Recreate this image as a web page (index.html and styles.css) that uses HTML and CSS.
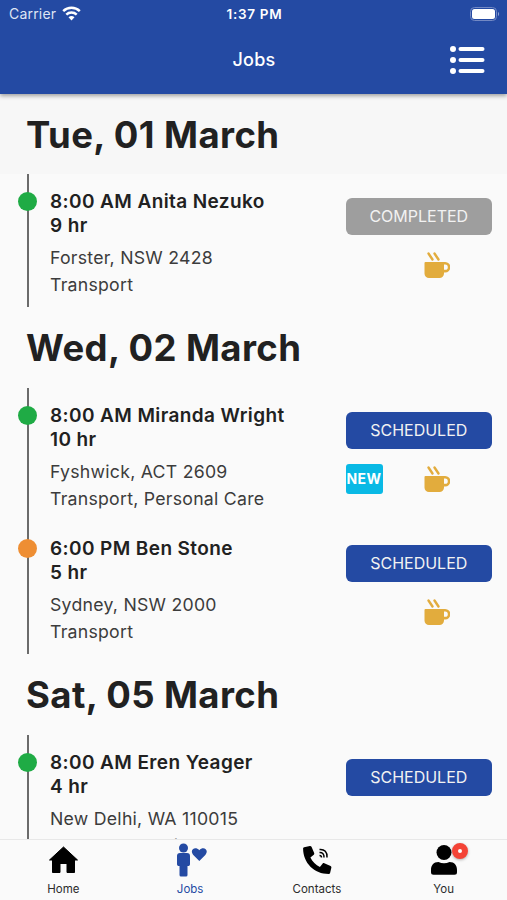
FILE: index.html
```html
<!DOCTYPE html>
<html lang="en">
<head>
  <meta charset="UTF-8">
  <meta name="viewport" content="width=device-width, initial-scale=1.0">
  <title>Jobs</title>
  <link rel="stylesheet" href="styles.css">
</head>
<body>
  <svg class="sprite" width="0" height="0">
    <symbol id="cup" viewBox="0 0 26 27">
      <path d="M4.500 1.500l4 6M10.500 1.500l4 6" fill="none" stroke="currentColor" stroke-width="2.400" stroke-linecap="round"/>
      <path d="M1.500 10H20v11.500a4.500 4.500 0 0 1-4.500 4.500H5a4.500 4.500 0 0 1-4.500-4.500V11a1 1 0 0 1 1-1z" fill="currentColor"/>
      <path d="M18 11.300h3.200a3.700 3.700 0 0 1 0 7.800H18" fill="none" stroke="currentColor" stroke-width="2.600"/>
    </symbol>
  </svg>

  <div class="app">
    <header class="header">
      <div class="status-bar">
        <div class="carrier">
          <span>Carrier</span>
          <svg width="19" height="15" viewBox="0 0 19 15" fill="none" stroke="#fff" stroke-width="2.500">
            <path d="M1.200 5.200a12 12 0 0 1 16.600 0M4.300 8.600a7.500 7.500 0 0 1 10.400 0"/>
            <path d="M6.500 11.300a4.400 4.400 0 0 1 6 0l-3 3.200z" fill="#fff" stroke="none"/>
          </svg>
        </div>
        <span class="time">1:37 PM</span>
        <div class="battery">
          <svg width="30" height="14" viewBox="0 0 30 14">
            <rect x="0.500" y="0.500" width="26" height="13" rx="4" fill="none" stroke="#7389c4"/>
            <rect x="2" y="2" width="23" height="10" rx="2.500" fill="#fff"/>
            <path d="M28 5v4c1.500-.6 1.500-3.400 0-4z" fill="#8fa3d3"/>
          </svg>
        </div>
      </div>
      <div class="title-bar">
        <h1>Jobs</h1>
        <svg class="menu" width="36" height="28" viewBox="0 0 36 28" fill="#fff">
          <circle cx="4" cy="3" r="3"/><rect x="9.500" y="1" width="26" height="4" rx="2"/>
          <circle cx="4" cy="14" r="3"/><rect x="9.500" y="12" width="26" height="4" rx="2"/>
          <circle cx="4" cy="25" r="3"/><rect x="9.500" y="23" width="26" height="4" rx="2"/>
        </svg>
      </div>
    </header>

    <main class="job-list">
      <h2 class="day day-current">Tue, 01 March</h2>
      <div class="job">
        <div class="timeline"><span class="dot"></span></div>
        <div class="details">
          <h3>8:00 AM Anita Nezuko<br>9 hr</h3>
          <p>Forster, NSW 2428</p>
          <p>Transport</p>
        </div>
        <div class="state">
          <div class="status completed">COMPLETED</div>
          <div class="tags"><svg class="cup"><use href="#cup"/></svg></div>
        </div>
      </div>

      <h2 class="day">Wed, 02 March</h2>
      <div class="job">
        <div class="timeline"><span class="dot"></span></div>
        <div class="details">
          <h3>8:00 AM Miranda Wright<br>10 hr</h3>
          <p>Fyshwick, ACT 2609</p>
          <p>Transport, Personal Care</p>
        </div>
        <div class="state">
          <div class="status">SCHEDULED</div>
          <div class="tags"><span class="new">NEW</span><svg class="cup"><use href="#cup"/></svg></div>
        </div>
      </div>
      <div class="job">
        <div class="timeline"><span class="dot orange"></span></div>
        <div class="details">
          <h3>6:00 PM Ben Stone<br>5 hr</h3>
          <p>Sydney, NSW 2000</p>
          <p>Transport</p>
        </div>
        <div class="state">
          <div class="status">SCHEDULED</div>
          <div class="tags"><svg class="cup"><use href="#cup"/></svg></div>
        </div>
      </div>

      <h2 class="day">Sat, 05 March</h2>
      <div class="job">
        <div class="timeline"><span class="dot"></span></div>
        <div class="details">
          <h3>8:00 AM Eren Yeager<br>4 hr</h3>
          <p>New Delhi, WA 110015</p>
          <p>Shower and toilet</p>
        </div>
        <div class="state">
          <div class="status">SCHEDULED</div>
        </div>
      </div>
    </main>

    <nav class="tab-bar">
      <a class="tab">
        <svg width="36" height="36" viewBox="0 0 36 36" fill="currentColor">
          <path d="M18.500 4L32.500 17H29.500V29.500H22V20.500H15V29.500H7.500V17H4.500z" stroke="currentColor" stroke-linejoin="round"/>
        </svg>
        <span>Home</span>
      </a>
      <a class="tab active">
        <svg width="36" height="36" viewBox="0 0 36 36" fill="currentColor">
          <circle cx="11.500" cy="5" r="4.500"/>
          <path d="M8 10h7a3 3 0 0 1 3 3v8a2 2 0 0 1-2.500 2V32a1.500 1.500 0 0 1-1.500 1.500H9A1.500 1.500 0 0 1 7.500 32v-9a2 2 0 0 1-2.500-2v-8a3 3 0 0 1 3-3z"/>
          <path d="M27.300 18l-6-6.100c-4.300-5 2-9.300 6-4.600 4-4.700 10.300-.4 6 4.600z"/>
        </svg>
        <span>Jobs</span>
      </a>
      <a class="tab">
        <svg width="36" height="36" viewBox="0 0 36 36" fill="currentColor">
          <path d="M5.100 4.300l5.800-1.300c.7-.1 1.300.2 1.600.8l2.700 6.300c.2.600.1 1.200-.4 1.600l-3.400 2.800c2 4.200 5.300 7.500 9.500 9.500l2.800-3.400c.4-.5 1-.6 1.600-.4l6.300 2.700c.6.300.9.900.8 1.600l-1.300 5.600c-.2.600-.7 1-1.300 1C15.200 31.100 4.100 20 4.100 5.600c0-.6.400-1.200 1-1.300z"/>
          <path d="M20.500 6.500c5-.5 8 2.500 7.500 8M20.500 9.500c3-.2 4.800 1.800 4.500 5M20.500 12.500c1.300 0 2 .7 2 2" fill="none" stroke="currentColor" stroke-width="1.500"/>
        </svg>
        <span>Contacts</span>
      </a>
      <a class="tab">
        <svg width="36" height="36" viewBox="0 0 36 36" fill="currentColor">
          <circle cx="18" cy="9.500" r="7.500"/>
          <path d="M12.500 19c3.500 1.600 7.500 1.600 11 0 5 0 7.500 3.500 7.500 8v2.300a2.500 2.500 0 0 1-2.500 2.500h-21A2.500 2.500 0 0 1 5 29.300V27c0-4.500 2.500-8 7.500-8z"/>
        </svg>
        <i class="badge"></i>
        <span>You</span>
      </a>
    </nav>
  </div>
</body>
</html>
```

FILE: styles.css
```css
* {
  box-sizing: border-box;
}

body {
  margin: 0;
  font-family: Inter, "Liberation Sans", sans-serif;
  color: #212121;
  background-color: #fafafa;
}

h1, h2, h3, p {
  margin: 0;
}

.sprite {
  display: block;
}

.app {
  height: 900px;
  display: flex;
  flex-direction: column;
  overflow: hidden;
}

.header {
  height: 94px;
  flex-shrink: 0;
  color: #fff;
  background-color: #244aa3;
  box-shadow: 0 2px 4px rgba(0, 0, 0, 0.35);
  z-index: 1;
}

.status-bar {
  display: grid;
  grid-template-columns: 1fr auto 1fr;
  align-items: center;
  height: 27px;
  padding: 0 7px 0 9px;
  font-size: 14px;
}

.carrier {
  display: flex;
  align-items: center;
  gap: 6px;
  color: #dfe5f4;
  letter-spacing: 0.2px;
}

.time {
  font-weight: 600;
  font-size: 13.5px;
  letter-spacing: 0.7px;
}

.battery {
  display: flex;
  justify-content: flex-end;
}

.title-bar {
  display: grid;
  grid-template-columns: 1fr auto 1fr;
  align-items: center;
  height: 65px;
  padding: 0 22px 0 23px;
}

.title-bar h1 {
  grid-column: 2;
  font-size: 18px;
  font-weight: 500;
  letter-spacing: 0.2px;
}

.menu {
  justify-self: end;
}

.job-list {
  flex: 1;
  min-height: 0;
  overflow: hidden;
}

.day {
  height: 81px;
  padding-left: 26px;
  font-size: 36.5px;
  font-weight: 700;
  line-height: 83px;
  letter-spacing: 0.4px;
}

.day-current {
  height: 80px;
  line-height: 82px;
  background-color: #f7f7f7;
}

.job {
  display: flex;
  height: 133px;
  padding: 0 15px 0 18px;
}

.timeline {
  width: 19px;
  padding-top: 18px;
  background: linear-gradient(#6b6b6b, #6b6b6b) center / 2px 100% no-repeat;
}

.dot {
  display: block;
  width: 19px;
  height: 19px;
  border-radius: 50%;
  background-color: #1fab45;
}

.orange {
  background-color: #ee8e33;
}

.details {
  flex: 1;
  padding: 16px 0 0 13px;
  white-space: nowrap;
}

.details h3 {
  margin-bottom: 7px;
  font-size: 19px;
  font-weight: 600;
  line-height: 23.5px;
  letter-spacing: 0.4px;
}

.details p {
  color: #3c3c3c;
  font-size: 17.7px;
  line-height: 27px;
  letter-spacing: 0.25px;
}

.state {
  width: 146.5px;
  padding-top: 24px;
}

.status {
  height: 37px;
  border-radius: 6px;
  color: #f2f2f2;
  background-color: #244aa3;
  font-size: 16px;
  line-height: 36px;
  text-align: center;
}

.completed {
  background-color: #9e9e9e;
}

.tags {
  display: flex;
  align-items: center;
  justify-content: flex-end;
  margin-top: 15px;
  padding-right: 42px;
  height: 30px;
}

.new {
  width: 37px;
  height: 30px;
  margin-right: auto;
  border-radius: 3px;
  color: #fff;
  background-color: #09b9e5;
  font-size: 14px;
  font-weight: 700;
  line-height: 30px;
  letter-spacing: 0.4px;
  text-align: center;
}

.cup {
  width: 26px;
  height: 27px;
  color: #e2ac3d;
}

.tab-bar {
  display: flex;
  height: 61px;
  flex-shrink: 0;
  border-top: 1px solid #e8e8e8;
  background-color: #fafafa;
}

.tab {
  position: relative;
  flex: 1;
  display: flex;
  flex-direction: column;
  align-items: center;
  padding-top: 3px;
  color: #000;
}

.tab span {
  margin-top: 3px;
  color: #2b2b2b;
  font-size: 11.5px;
  line-height: 15px;
}

.active, .active span {
  color: #244aa3;
}

.badge {
  position: absolute;
  top: 3px;
  left: 72px;
  width: 16px;
  height: 16px;
  border: 6px solid #f44336;
  border-radius: 50%;
  background-color: #fff;
  box-shadow: 0 1px 3px rgba(0, 0, 0, 0.3);
}
```
